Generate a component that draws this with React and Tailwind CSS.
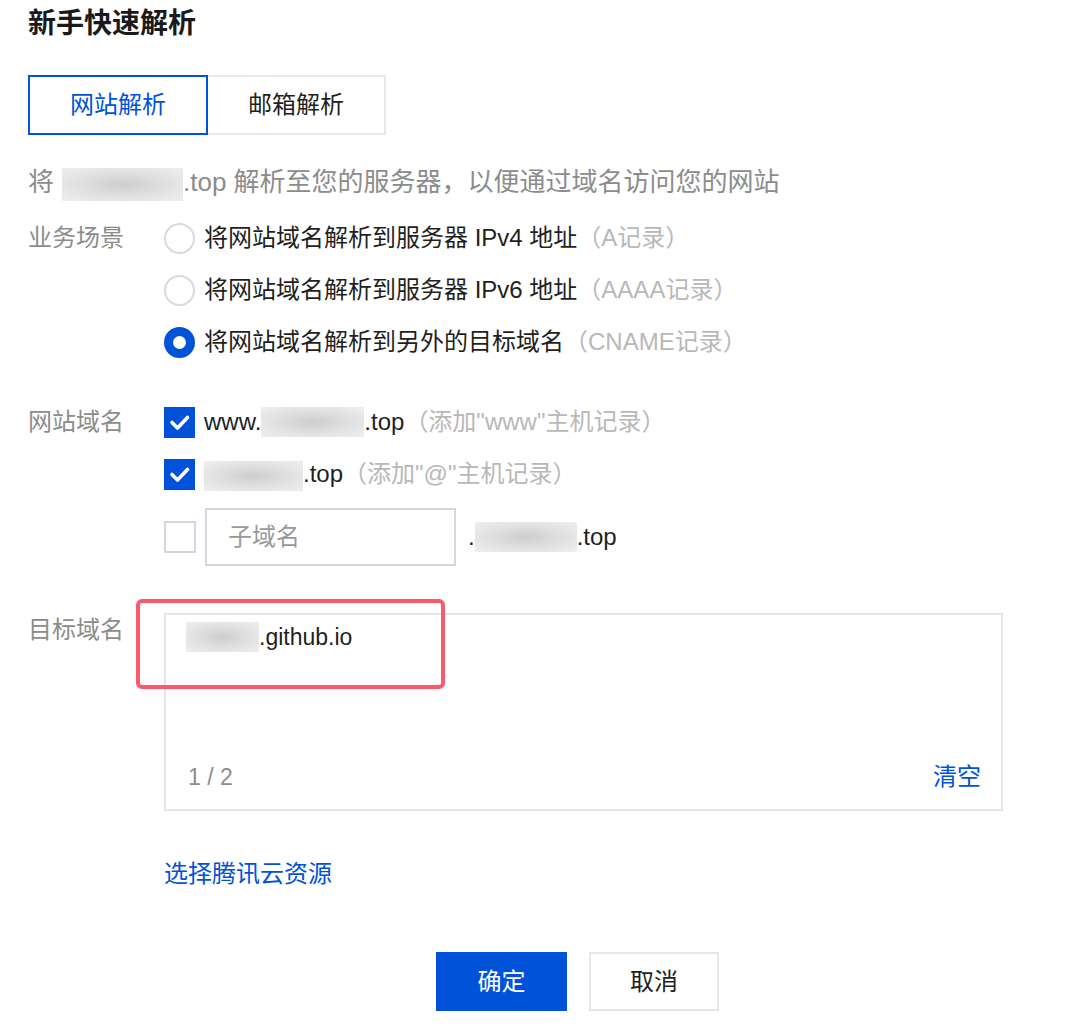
import React from "react";

function Blur({ w, h = 32 }) {
  return (
    <span
      className="inline-block align-middle bg-[radial-gradient(ellipse_at_center,#cdcdcd_0%,#e2e2e2_55%,#efefef_100%)]"
      style={{ width: w, height: h }}
    />
  );
}

function Radio({ checked }) {
  if (checked) {
    return (
      <span className="flex h-[31px] w-[31px] shrink-0 items-center justify-center rounded-full bg-[#0052d9]">
        <span className="h-[13px] w-[13px] rounded-full bg-white" />
      </span>
    );
  }
  return <span className="h-[31px] w-[31px] shrink-0 rounded-full border-2 border-[#d6dbe3] bg-white" />;
}

function Check({ checked }) {
  if (checked) {
    return (
      <span className="flex h-[31px] w-[31px] shrink-0 items-center justify-center bg-[#0052d9]">
        <svg width="31" height="31" viewBox="0 0 31 31">
          <path d="M8 15.5 L13.5 21 L23.5 10.5" fill="none" stroke="white" strokeWidth="3.6" strokeLinecap="round" strokeLinejoin="round" />
        </svg>
      </span>
    );
  }
  return <span className="h-[32px] w-[32px] shrink-0 border-2 border-[#d3d8e0] bg-white" />;
}

export default function App() {
  const options = [
    { text: "将网站域名解析到服务器 IPv4 地址", hint: "（A记录）", checked: false },
    { text: "将网站域名解析到服务器 IPv6 地址", hint: "（AAAA记录）", checked: false },
    { text: "将网站域名解析到另外的目标域名", hint: "（CNAME记录）", checked: true },
  ];
  return (
    <div className="relative h-[1028px] w-[1088px] overflow-hidden bg-white font-['Liberation_Sans','Noto_Sans_CJK_SC',sans-serif] text-[24px] text-[#1f1f1f]">
      <div className="pl-[28px]">
        <div className="mt-[4px] h-[40px] text-[28px] font-bold leading-[40px] text-[#1a1a1a]">新手快速解析</div>

        <div className="mt-[31px] flex h-[60px]">
          <div className="flex w-[180px] items-center justify-center border-2 border-[#0052d9] text-[#0052d9]">网站解析</div>
          <div className="flex w-[178px] items-center justify-center border-2 border-l-0 border-[#e5e8ee] text-[#1f1f1f]">邮箱解析</div>
        </div>

        <div className="mt-[27px] flex h-[40px] items-center text-[26px] leading-[40px] text-[#8c8c8c]">
          <span>将</span>
          <span className="ml-[8px]"><Blur w={121} h={33} /></span>
          <span>.top 解析至您的服务器，以便通过域名访问您的网站</span>
        </div>

        <div className="mt-[10px] flex">
          <div className="h-[52px] w-[136px] shrink-0 leading-[52px] text-[#8c8c8c]">业务场景</div>
          <div className="flex flex-col">
            {options.map((o, i) => (
              <div key={i} className="flex h-[52px] items-center">
                <Radio checked={o.checked} />
                <span className="ml-[9px] text-[#1f1f1f]">{o.text}</span>
                <span className="text-[#b8b8b8]">{o.hint}</span>
              </div>
            ))}
          </div>
        </div>

        <div className="mt-[28px] flex">
          <div className="h-[52px] w-[136px] shrink-0 leading-[52px] text-[#8c8c8c]">网站域名</div>
          <div className="flex flex-col">
            <div className="flex h-[52px] items-center">
              <Check checked />
              <span className="ml-[9px]">www.</span>
              <Blur w={103} h={30} />
              <span>.top</span>
              <span className="text-[#b8b8b8]">（添加"www"主机记录）</span>
            </div>
            <div className="flex h-[52px] items-center">
              <Check checked />
              <span className="ml-[9px]"><Blur w={99} h={30} /></span>
              <span>.top</span>
              <span className="text-[#b8b8b8]">（添加"@"主机记录）</span>
            </div>
            <div className="mt-[8px] flex h-[58px] items-center">
              <Check />
              <div className="ml-[9px] flex h-[58px] w-[251px] items-center border-2 border-[#d3d8e0] pl-[21px] text-[#999999]">子域名</div>
              <span className="ml-[12px]">.</span>
              <Blur w={102} h={30} />
              <span>.top</span>
            </div>
          </div>
        </div>

        <div className="mt-[47px] flex">
          <div className="h-[34px] w-[136px] shrink-0 leading-[34px] text-[#8c8c8c]">目标域名</div>
          <div className="flex h-[198px] w-[839px] flex-col justify-between border-2 border-[#e3e6eb] pb-[16px] pl-[20px] pr-[20px] pt-[6px]">
            <div className="flex h-[32px] items-center text-[23px] text-[#1f1f1f]">
              <Blur w={73} h={30} />
              <span>.github.io</span>
            </div>
            <div className="flex h-[32px] items-center justify-between">
              <span className="ml-[2px] text-[23px] text-[#8c8c8c]">1 / 2</span>
              <span className="text-[#0052d9]">清空</span>
            </div>
          </div>
        </div>

        <div className="ml-[136px] mt-[43px] h-[40px] leading-[40px] text-[#0052d9]">选择腾讯云资源</div>

        <div className="ml-[408px] mt-[58px] flex gap-[22px]">
          <div className="flex h-[59px] w-[131px] items-center justify-center bg-[#0052d9] text-white">确定</div>
          <div className="flex h-[59px] w-[130px] items-center justify-center border-2 border-[#e3e6eb] text-[#1f1f1f]">取消</div>
        </div>
      </div>

      <div className="absolute left-[136px] top-[599px] h-[90px] w-[309px] rounded-[6px] border-4 border-[#fb5a6c]" />
    </div>
  );
}
